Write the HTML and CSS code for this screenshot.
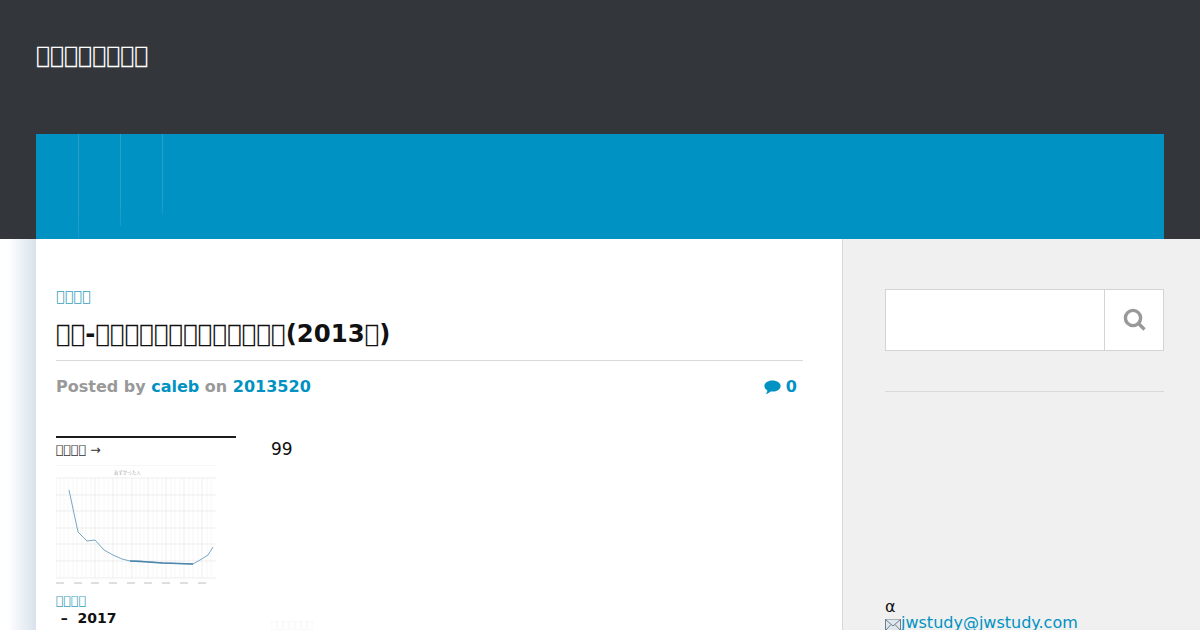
FILE: index.html
```html
<!DOCTYPE html>
<html>
  <head>
    <meta charset="utf-8" />
    <title>jwstudy</title>
    <link rel="stylesheet" href="styles.css">
  </head>
  <body>
    <header class="site-header">
      <div class="site-title">&#xE000;&#xE001;&#xE002;&#xE003;&#xE004;&#xE005;&#xE006;&#xE007;</div>
      <nav class="main-nav">
        <span class="nav-item nav-first"></span>
        <span class="nav-item nav-second"></span>
        <span class="nav-item"></span>
      </nav>
    </header>

    <div class="page">
      <main class="content">
        <a class="category" href="#">&#xE000;&#xE001;&#xE002;&#xE003;</a>
        <h1 class="post-title">&#xE000;&#xE001;-&#xE002;&#xE003;&#xE004;&#xE005;&#xE006;&#xE007;&#xE008;&#xE009;&#xE00A;&#xE00B;&#xE00C;&#xE00D;&#xE00E;(2013&#xE010;)</h1>
        <div class="post-meta">
          <span>Posted by <a href="#">caleb</a> on <a href="#">2013520</a></span>
          <a class="comments" href="#">
            <svg class="comment-icon" viewBox="0 0 17 15"><path d="M8.5 0.5C13 0.5 16.6 2.9 16.6 6s-3.6 5.6-8.1 5.6c-.7 0-1.3-.1-1.9-.2C5.400 12.500 3.900 13.600 1.800 14c.8-.9 1.500-2 1.600-3.500C1.600 9.400.4 7.800.4 6 .4 2.900 4 .5 8.500.5z"/></svg>
            0
          </a>
        </div>
        <div class="post-body">
          <aside class="related">
            <div class="related-head">&#xE000;&#xE001;&#xE002;&#xE003; →</div>
            <svg class="chart" viewBox="0 0 160 120">
              <g class="grid">
                <path class="grid-minor" d="M4 13V113M8 13V113M12 13V113M17 13V113M21 13V113M26 13V113M30 13V113M35 13V113M43 13V113M48 13V113M52 13V113M61 13V113M66 13V113M70 13V113M80 13V113M84 13V113M88 13V113M97 13V113M101 13V113M106 13V113M115 13V113M119 13V113M124 13V113M133 13V113M137 13V113M142 13V113M151 13V113M155 13V113"/>
                <path d="M0 0H160M0 13H160M0 30H160M0 46H160M0 63H160M0 79H160M0 96H160M0 113H160"/>
                <path d="M0 13V113M39 13V113M57 13V113M76 13V113M92 13V113M110 13V113M128 13V113M146 13V113"/>
              </g>
              <text class="chart-title" x="58" y="9">あずかった人</text>
              <polyline class="chart-line" points="13,25 22,67 31,76 39,75 48,85 57,90 66,94 74,96 84,96 107,98 137,99 144,95 152,90 157,82"/>
              <polyline class="chart-flat" points="74,96 84,96.500 107,98 137,99"/>
              <g class="chart-years">
                <path d="M0 118H8M18 118H26M35 118H43M53 118H61M71 118H79M88 118H96M106 118H114M124 118H132M142 118H150"/>
              </g>
            </svg>
            <a class="related-cat" href="#">&#xE000;&#xE001;&#xE002;&#xE003;</a>
            <div class="related-date">&nbsp;–&nbsp; 2017</div>
          </aside>
          <div class="post-text">
            <p class="count">99</p>
            <p class="faint">&#xE000;&#xE001;&#xE002;&#xE003;&#xE004;&#xE005;&#xE006;</p>
          </div>
        </div>
      </main>

      <aside class="sidebar">
        <form class="search">
          <div class="search-field"></div>
          <div class="search-btn">
            <svg class="search-icon" viewBox="0 0 24 24"><circle cx="10" cy="10" r="7.600"/><path d="M15.500 15.500L21.500 21.500"/></svg>
          </div>
        </form>
        <hr class="side-rule">
        <div class="contact">
          <div class="alpha">α</div>
          <div class="mail">
            <svg class="mail-icon" viewBox="0 0 16 12"><rect x="0.500" y="0.500" width="15" height="11"/><path d="M0.500 0.500L8 7L15.500 0.500M0.500 11.500L6 5.500M15.500 11.500L10 5.500"/></svg><a href="#">jwstudy@jwstudy.com</a>
          </div>
        </div>
      </aside>
    </div>
  </body>
</html>
```

FILE: styles.css
```css
html, body {
  margin: 0;
  height: 630px;
  overflow: hidden;
}
body {
  background: #fff;
  color: #111;
  font-family: "DejaVu Sans", sans-serif;
  font-size: 16px;
}
a {
  color: #0092c2;
  text-decoration: none;
}

.site-header {
  background: #33363b;
  height: 239px;
  padding: 0 36px;
  box-sizing: border-box;
  display: flex;
  flex-direction: column;
}
.site-title {
  color: #fff;
  font-size: 23.400px;
  line-height: 28px;
  padding-top: 41px;
  height: 93px;
}
.main-nav {
  background: #0092c2;
  height: 105px;
  display: flex;
  align-items: flex-start;
  padding-left: 42px;
}
.nav-item {
  width: 42px;
  height: 80px;
  background: linear-gradient(#2a9fc9 75%, #149ac7) 0 0 / 1px 100% no-repeat;
}
.nav-first {
  height: 105px;
}
.nav-second {
  height: 92px;
}

.page {
  display: flex;
  padding-left: 36px;
  height: 391px;
  background: linear-gradient(to right, #fff 8px, #d8e2ec 36px);
}
.content {
  width: 806px;
  box-sizing: border-box;
  padding: 46px 39px 0 20px;
  background: #fff;
}
.category {
  display: block;
  font-size: 14.400px;
  line-height: 22px;
  color: #3a9fc0;
}
.post-title {
  margin: 10px 0 0;
  padding-bottom: 10px;
  font-size: 24.400px;
  line-height: 33px;
  border-bottom: 1px solid #d9d9d9;
}
.post-meta {
  display: flex;
  justify-content: space-between;
  padding: 16px 6px 0 0;
  font-size: 16px;
  line-height: 20px;
  font-weight: bold;
  color: #999;
}
.comments {
  display: flex;
  align-items: center;
  gap: 5px;
}
.comment-icon {
  width: 17px;
  height: 15px;
  fill: #0092c2;
}

.post-body {
  display: flex;
  margin-top: 39px;
}
.related {
  width: 180px;
  border-top: 2px solid #1c1c1c;
  flex-shrink: 0;
}
.related-head {
  font-size: 12.600px;
  line-height: 24px;
  color: #333;
}
.chart {
  display: block;
  width: 160px;
  height: 120px;
  margin-top: 3px;
  filter: blur(0.3px);
}
.grid path {
  fill: none;
  stroke: #e6e6e6;
  stroke-width: 0.700;
}
.grid .grid-minor {
  stroke: #f3f3f3;
}
.chart-title {
  font-size: 4.500px;
  fill: #aaa;
  font-family: "Noto Sans CJK JP", sans-serif;
}
.chart-line {
  fill: none;
  stroke: #6a9cbc;
  stroke-width: 0.900;
}
.chart-flat {
  fill: none;
  stroke: #4d86ab;
  stroke-width: 1.300;
}
.chart-years path {
  fill: none;
  stroke: #d4d4d4;
  stroke-width: 1.500;
}
.related-cat {
  display: block;
  margin-top: 7px;
  font-size: 12.600px;
  line-height: 17px;
  color: #3a9fc0;
}
.related-date {
  font-size: 14px;
  font-weight: bold;
  line-height: 18px;
}

.post-text {
  margin-left: 35px;
  padding-top: 1px;
  line-height: 24px;
}
.count {
  margin: 0;
  font-size: 17px;
}
.faint {
  margin: 159px 0 0;
  font-size: 10px;
  line-height: 9px;
  color: #f6f6f6;
}

.sidebar {
  flex: 1;
  background: #f0f0f0;
  border-left: 1px solid #d9d9d9;
  padding: 50px 36px 0 42px;
}
.search {
  display: flex;
  height: 62px;
  box-sizing: border-box;
  border: 1px solid #d4d4d4;
  background: #fff;
}
.search-field {
  flex: 1;
}
.search-btn {
  width: 59px;
  padding-left: 1px;
  box-sizing: border-box;
  border-left: 1px solid #d4d4d4;
  display: flex;
  align-items: center;
  justify-content: center;
}
.search-icon {
  width: 24px;
  height: 24px;
  fill: none;
  stroke: #999;
  stroke-width: 3.400;
}
.side-rule {
  border: 0;
  border-top: 1px solid #d9d9d9;
  margin: 40px 0 0;
}
.contact {
  margin-top: 207px;
  line-height: 16px;
}
.alpha {
  font-size: 16px;
}
.mail {
  display: flex;
  align-items: flex-end;
  font-size: 16px;
}
.mail-icon {
  width: 16px;
  height: 12px;
  fill: #dfe6ec;
  stroke: #6f7f8c;
  stroke-width: 1;
}
```
